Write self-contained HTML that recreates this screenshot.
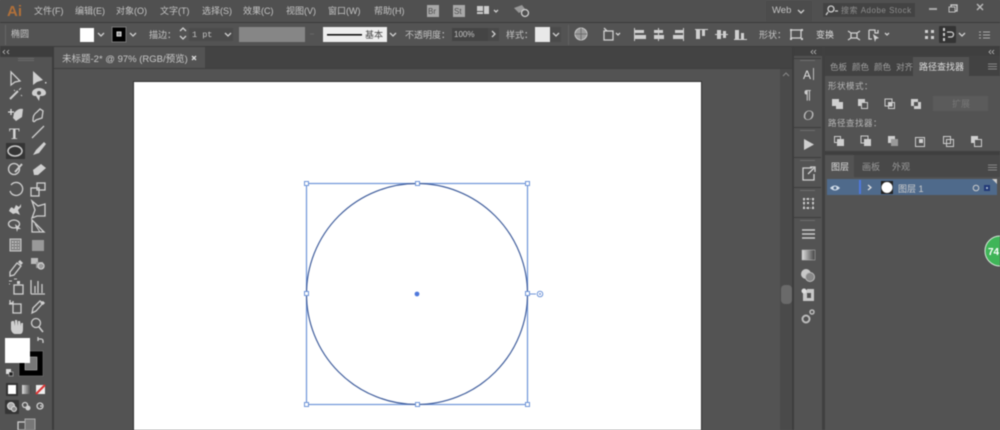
<!DOCTYPE html>
<html><head><meta charset="utf-8"><style>
html,body{margin:0;padding:0;background:#555;width:1000px;height:430px;overflow:hidden}
svg{display:block;filter:blur(.45px)}
text{font-family:"Liberation Sans","Noto Sans CJK SC",sans-serif;font-size:9px;fill:#c4c4c4}
.i{fill:none;stroke:#cfcfcf;stroke-width:1.3}
.f{fill:#cfcfcf}
</style></head><body>
<svg width="1000" height="430" viewBox="0 0 1000 430" xmlns="http://www.w3.org/2000/svg">
<rect width="1000" height="430" fill="#555"/>
<!-- menu bar -->
<rect width="1000" height="22" fill="#505050"/>
<rect y="22" width="1000" height="1" fill="#3a3a3a"/>
<text x="7" y="16" style="font-size:15px;font-weight:bold;fill:#b0703a">Ai</text>
<text x="34" y="14">文件(F)</text><text x="75" y="14">编辑(E)</text><text x="116" y="14">对象(O)</text><text x="160" y="14">文字(T)</text><text x="202" y="14">选择(S)</text><text x="243" y="14">效果(C)</text><text x="286" y="14">视图(V)</text><text x="328" y="14">窗口(W)</text><text x="374" y="14">帮助(H)</text>
<rect x="427" y="5" width="12" height="12" fill="#a8a8a8"/><text x="428" y="14" style="font-size:8px;fill:#505050">Br</text>
<rect x="453" y="5" width="12" height="12" fill="#a8a8a8"/><text x="454" y="14" style="font-size:8px;fill:#505050">St</text>
<rect x="477" y="6" width="6" height="5" fill="#ccc"/><rect x="484" y="6" width="5" height="8" fill="#ccc"/><rect x="477" y="12" width="6" height="2" fill="#ccc"/>
<path d="M494 10l2 2 2-2" class="i"/>
<path d="M514 8l8-3 3 4-6 4z" fill="#999"/><circle cx="525" cy="13" r="3.500" class="i"/>
<rect x="766" y="1" width="46" height="20" fill="#4c4c4c"/>
<text x="772" y="13" style="font-size:9.5px">Web</text><path d="M798 10l3 3 3-3" class="i"/>
<rect x="823" y="3" width="92" height="14" rx="1" fill="#434343"/>
<circle cx="831" cy="9" r="3" class="i"/><path d="M828 12l-2 3M835 11h3" class="i"/>
<text x="841" y="13" style="font-size:8px;fill:#8e8e8e;letter-spacing:.5px">搜索 Adobe Stock</text>
<rect x="929" y="8" width="8" height="2" fill="#aaa"/>
<rect x="951" y="5" width="6" height="6" class="i" stroke-width="1"/><rect x="949" y="7" width="6" height="5" fill="#505050" stroke="#bbb"/>
<path d="M977 4l6 6M983 4l-6 6" stroke="#bbb" stroke-width="1.400"/>
<!-- control bar -->
<rect y="23" width="1000" height="24" fill="#535353"/>
<rect y="46" width="1000" height="1" fill="#3c3c3c"/>
<rect x="5" y="25" width="1" height="20" fill="#666"/>
<text x="11" y="37">椭圆</text>
<rect x="80" y="28" width="14" height="14" fill="#fff"/>
<path d="M98 33l3 3 3-3" class="i"/>
<rect x="112" y="27" width="14" height="15" fill="#000" stroke="#777"/><rect x="117" y="32" width="4" height="4" fill="#999" stroke="#ddd"/>
<path d="M130 33l3 3 3-3" class="i"/>
<text x="149" y="38">描边：</text>
<path d="M180 31l3-3 3 3M180 36l3 3 3-3" class="i"/>
<rect x="189" y="28" width="32" height="13" fill="#4b4b4b"/><text x="192" y="37" style="font-family:'Liberation Mono',monospace;font-size:8.5px">1 pt</text>
<rect x="221" y="28" width="12" height="13" fill="#4b4b4b"/><path d="M225 33l3 3 3-3" class="i"/>
<rect x="239" y="27" width="66" height="15" fill="#868686"/>
<path d="M310 34h4" stroke="#666"/>
<rect x="323" y="27" width="64" height="15" fill="#eee"/>
<rect x="327" y="34" width="35" height="1.600" fill="#111"/>
<text x="365" y="38" style="fill:#444">基本</text>
<path d="M390 33l3 3 3-3" class="i"/>
<text x="405" y="38">不透明度：</text>
<rect x="452" y="28" width="36" height="13" fill="#444"/><text x="454" y="37" style="font-size:8px">100%</text>
<rect x="488" y="28" width="11" height="13" fill="#494949"/><path d="M492 31l3 3-3 3" class="i"/>
<text x="506" y="38">样式：</text>
<rect x="535" y="27" width="15" height="15" fill="#e8e8e8"/><rect x="550" y="27" width="11" height="15" fill="#4b4b4b"/>
<path d="M553 33l3 3 3-3" class="i"/>
<rect x="568" y="25" width="1" height="20" fill="#606060"/>
<circle cx="581" cy="34" r="6" fill="#9a9a9a" stroke="#ccc"/><path d="M575 34h12M581 28v12" stroke="#666" stroke-width=".8"/>
<rect x="604" y="31" width="9" height="9" class="i" fill="none"/><path d="M604 28l3 3" class="i"/><path d="M616 33l2 2 2-2" class="i"/>
<g class="f"><rect x="634" y="28" width="1" height="13"/><rect x="635" y="30" width="9" height="3"/><rect x="635" y="35" width="11" height="4"/>
<rect x="658" y="28" width="1" height="13"/><rect x="654" y="30" width="9" height="3"/><rect x="654" y="35" width="10" height="4"/>
<rect x="683" y="28" width="1" height="13"/><rect x="675" y="30" width="8" height="3"/><rect x="673" y="35" width="10" height="4"/>
<rect x="695" y="29" width="13" height="1"/><rect x="696" y="30" width="4" height="9"/><rect x="702" y="30" width="3" height="6"/>
<rect x="715" y="34" width="13" height="1"/><rect x="717" y="30" width="4" height="9"/><rect x="723" y="31" width="3" height="7"/>
<rect x="734" y="39" width="13" height="1"/><rect x="735" y="30" width="4" height="9"/><rect x="741" y="33" width="3" height="6"/></g>
<text x="759" y="38">形状：</text>
<rect x="791" y="30" width="10" height="8" class="i" stroke-width="1"/><rect x="790" y="29" width="2" height="2" class="f"/><rect x="801" y="29" width="2" height="2" class="f"/><rect x="790" y="38" width="2" height="2" class="f"/><rect x="801" y="38" width="2" height="2" class="f"/>
<text x="816" y="38" style="fill:#ddd">变换</text>
<path d="M848 31l3 2h6l3-2M848 40l3-2h6l3 2M851 33v5M857 33v5" class="i"/>
<path d="M869 30h6v3h3v-3M869 30v9h3" class="i"/><path d="M873 34l6 4-3 1-1 3z" class="f"/><path d="M885 33l2 2 2-2" class="i"/>
<g class="f"><rect x="925" y="30" width="3" height="3"/><rect x="931" y="30" width="3" height="3"/><rect x="925" y="36" width="3" height="3"/><rect x="931" y="36" width="3" height="3"/></g>
<rect x="939" y="26" width="17" height="17" rx="1" fill="#343434"/>
<rect x="943" y="28" width="2" height="3" class="f"/><rect x="943" y="33" width="2" height="3" class="f"/><rect x="943" y="38" width="2" height="3" class="f"/><path d="M947 32h4a2 2 0 0 1 0 5h-3" class="i"/>
<path d="M959 33l3 3 3-3" class="i"/>
<path d="M979 32h2M983 32h7M979 35h2M983 35h7M979 38h2M983 38h7" stroke="#aaa"/>
<!-- tab bar -->
<rect y="47" width="1000" height="22" fill="#434343"/>
<rect x="54" y="47" width="151" height="22" fill="#535353"/>
<text x="62" y="62" style="font-size:9.5px;fill:#c8c8c8">未标题-2* @ 97% (RGB/预览)</text>
<path d="M192 56l4 4M196 56l-4 4" stroke="#ddd" stroke-width="1.300"/>
<rect x="54" y="68" width="739" height="1" fill="#3f3f3f"/>
<!-- canvas -->
<rect x="53" y="69" width="740" height="361" fill="#535353"/>
<rect x="134" y="82" width="567" height="348" fill="#fff"/>
<rect x="133" y="82" width="1" height="348" fill="#333"/>
<rect x="701" y="82" width="1" height="348" fill="#333"/>
<rect x="133" y="81" width="569" height="1" fill="#333"/>
<!-- selection -->
<rect x="306.500" y="183.500" width="221" height="221" fill="none" stroke="#6f95d8" stroke-width="1.200"/>
<circle cx="417" cy="294" r="110.500" fill="none" stroke="#3f5d9c" stroke-width="1.200"/>
<path d="M528 294h8" stroke="#6f95d8"/><circle cx="540" cy="294" r="2.800" fill="#fff" stroke="#6f95d8"/><circle cx="540" cy="294" r=".9" fill="#5a80d0"/>
<g fill="#fff" stroke="#6f95d8"><rect x="304.500" y="181.500" width="4" height="4"/><rect x="415.500" y="181.500" width="4" height="4"/><rect x="525.500" y="181.500" width="4" height="4"/><rect x="304.500" y="291.500" width="4" height="4"/><rect x="525.500" y="291.500" width="4" height="4"/><rect x="304.500" y="402.500" width="4" height="4"/><rect x="415.500" y="402.500" width="4" height="4"/><rect x="525.500" y="402.500" width="4" height="4"/></g>
<circle cx="417" cy="294" r="2.400" fill="#4f78dc"/>
<!-- left toolbar -->
<rect y="47" width="53" height="383" fill="#535353"/>
<rect x="0" y="47" width="53" height="10" fill="#3d3d3d"/>
<path d="M5 50l-2 2 2 2M9 50l-2 2 2 2" stroke="#bbb" fill="none" stroke-width=".8"/>
<rect x="52" y="47" width="2" height="383" fill="#3c3c3c"/>
<rect x="18" y="58" width="16" height="1" fill="#6a6a6a"/><rect x="18" y="60" width="16" height="1" fill="#6a6a6a"/>
<!-- tools -->
<path d="M11 72l0 13 4-3 5-1z" class="i"/>
<path d="M33 71v14l4-3 6-2z" class="f"/><rect x="45" y="82" width="1.500" height="1.500" class="f"/>
<path d="M10 99l8-8" stroke="#ccc" stroke-width="2"/><path d="M19 90l2-2M14 90l1 1M21 95l1 1" stroke="#ccc"/>
<path d="M32 93a7 5 0 0 1 14 0c0 3-4 3-6 3l-1 5-3-5c-3 0-4-1-4-3z" class="f"/><circle cx="39" cy="93" r="2" fill="#535353"/>
<path d="M14 113c3-3 5-5 9-4l-1 8-6 4-3-3z" class="f"/><path d="M8 112h6M11 109v6" stroke="#ddd" stroke-width="1.300"/>
<path d="M33 121c0-5 1-7 4-9l3-3 3 2-1 7-6 2c-2 2-2 2-3 1z" class="i"/>
<text x="9" y="139" style="font-size:16px;font-family:'Liberation Serif',serif;fill:#d4d4d4;font-weight:bold">T</text>
<path d="M32 138l12-12" stroke="#ccc" stroke-width="1.300"/>
<rect x="6" y="143" width="19" height="16" fill="#353535"/><ellipse cx="15" cy="151" rx="7" ry="5" fill="none" stroke="#ccc" stroke-width="1.500"/>
<path d="M33 155l3-5 8-8 2 2-7 9z" class="f"/>
<circle cx="14" cy="169" r="5.500" class="i" stroke-width="2"/><path d="M15 172l7-8" stroke="#ccc" stroke-width="2"/>
<path d="M33 170l8-6 5 4-8 7h-4z" class="f"/>
<path d="M11 185a6.500 6.500 0 1 1 -1 6" class="i" stroke-width="1.800"/>
<rect x="31" y="188" width="8" height="8" class="i"/><rect x="37" y="183" width="8" height="7" class="i"/>
<path d="M9 211c2-5 3-4 5-2l2-4 3 2 2-3v3l-3 3 2 5-4-2-3 1z" class="f"/>
<path d="M32 201l6 5 7-2v12h-8l-5 2 3-8z" class="i"/>
<ellipse cx="14" cy="224" rx="5.500" ry="4" class="i"/><path d="M15 224l6 5-3 0-1 3z" class="f"/>
<path d="M32 220v12h12z" class="i"/><path d="M35 224l5 8" stroke="#ccc"/>
<rect x="10" y="239" width="11" height="12" fill="#888" stroke="#ccc"/><path d="M12 242h7M12 245h7M12 248h7" stroke="#ddd" stroke-dasharray="1.500 1.500"/>
<rect x="32" y="240" width="12" height="11" fill="#999"/>
<path d="M10 272l7-9 4 3-7 9-4 1z" class="i"/><path d="M18 262l2-2 3 3-2 2" class="f"/>
<rect x="31" y="258" width="7" height="6" fill="#bbb"/><rect x="36" y="262" width="7" height="6" fill="#999"/><circle cx="41" cy="266" r="3" class="i"/>
<rect x="14" y="285" width="9" height="9" class="i"/><path d="M9 281h3M9 284h1M14 279h3" stroke="#ccc"/><rect x="17" y="281" width="3" height="3" class="f"/>
<path d="M31 280v14M35 293v-7M38 293v-12M42 293v-9M31 294h14" stroke="#ccc" stroke-width="1.300"/>
<path d="M9 304h12v9h-8v-12" class="i"/><path d="M10 300v3h3" class="i"/>
<path d="M32 313l1-5 7-7 3 2-7 8z" class="i"/><path d="M40 303l3-2 2 2-2 2" class="f"/>
<path d="M11 322v7c0 2 2 5 4 5h5c2 0 3-2 3-5v-6l-2 0v3l-1-5-2 0v5l-1-6h-2v6l-1-5h-2z" class="f"/>
<circle cx="36" cy="323" r="4.500" class="i"/><path d="M39 327l4 5" stroke="#ccc" stroke-width="1.600"/>
<!-- fill stroke -->
<rect x="19" y="351" width="24" height="25" fill="#000" stroke="#888" stroke-width=".5"/>
<rect x="25" y="357" width="12" height="13" fill="#777" stroke="#ccc" stroke-width=".5"/>
<rect x="5" y="338" width="25" height="25" fill="#fff"/>
<path d="M38 339h3a2 2 0 0 1 2 2v2M38 337v4" class="i" stroke-width="1"/>
<rect x="6" y="369" width="5" height="5" fill="#ddd"/><rect x="9" y="372" width="4" height="4" fill="#222" stroke="#ddd" stroke-width=".5"/>
<rect x="6" y="383" width="12" height="13" fill="#333"/><rect x="8" y="385" width="8" height="9" fill="#fff"/>
<defs><linearGradient id="g"><stop offset="0" stop-color="#ddd"/><stop offset="1" stop-color="#444"/></linearGradient></defs>
<rect x="22" y="385" width="9" height="9" fill="url(#g)"/>
<rect x="36" y="385" width="9" height="9" fill="#eee"/><path d="M36 394l9-9" stroke="#d33" stroke-width="2"/>
<rect x="5" y="400" width="14" height="14" rx="1" fill="#353535"/><circle cx="11" cy="406" r="3.500" fill="#aaa" stroke="#ddd"/><circle cx="14" cy="409" r="2.500" fill="#888" stroke="#ddd"/>
<circle cx="25" cy="405" r="2.500" class="i"/><circle cx="28" cy="408" r="2.500" class="f"/>
<circle cx="40" cy="406" r="3" class="i"/><circle cx="41" cy="406" r="1" class="f"/>
<rect x="18" y="422" width="9" height="8" class="i" fill="#666"/><rect x="25" y="419" width="10" height="11" fill="#777" stroke="#aaa"/>
<!-- right scroll strip -->
<rect x="780" y="69" width="13" height="361" fill="#4a4a4a"/>
<path d="M783 76l3-3 3 3" stroke="#888" fill="none"/>
<rect x="781" y="285" width="11" height="19" rx="4" fill="#6a6a6a"/>
<rect x="792" y="47" width="2" height="383" fill="#3d3d3d"/>
<!-- dock -->
<rect x="794" y="47" width="28" height="383" fill="#535353"/>
<rect x="794" y="47" width="206" height="9" fill="#3f3f3f"/>
<path d="M813 50l-2 2 2 2M816 50l-2 2 2 2M991 50l-2 2 2 2M994 50l-2 2 2 2" stroke="#bbb" fill="none" stroke-width=".8"/>
<rect x="822" y="47" width="3" height="383" fill="#404040"/>
<rect x="794" y="58" width="27" height="1" fill="#3c3c3c"/>
<rect x="800" y="60" width="15" height="1" fill="#6c6c6c"/>
<text x="803" y="79" style="font-size:12px;fill:#ddd">A</text><rect x="813" y="68" width="1" height="12" fill="#bbb"/>
<text x="804" y="99" style="font-size:13px;fill:#ccc;font-weight:bold">¶</text>
<text x="803" y="120" style="font-size:15px;fill:#bbb;font-style:italic;font-family:'Liberation Serif',serif">O</text>
<rect x="794" y="127" width="27" height="1" fill="#3c3c3c"/><rect x="800" y="130" width="15" height="1" fill="#6c6c6c"/>
<path d="M804 139l10 5.500-10 5.500z" fill="#d0d0d0"/>
<rect x="794" y="157" width="27" height="1" fill="#3c3c3c"/><rect x="800" y="160" width="15" height="1" fill="#6c6c6c"/>
<path d="M812 168h-9v12h11v-6" class="i"/><path d="M808 174l6-6M810 167h5v5" class="i"/>
<rect x="794" y="187" width="27" height="1" fill="#3c3c3c"/><rect x="800" y="190" width="15" height="1" fill="#6c6c6c"/>
<rect x="804" y="199" width="9" height="9" fill="none" stroke="#aaa" stroke-dasharray="1 1"/><g class="f"><rect x="803" y="198" width="2" height="2"/><rect x="807" y="198" width="2" height="2"/><rect x="812" y="198" width="2" height="2"/><rect x="803" y="202" width="2" height="2"/><rect x="807" y="202" width="2" height="2"/><rect x="812" y="202" width="2" height="2"/><rect x="803" y="207" width="2" height="2"/><rect x="807" y="207" width="2" height="2"/><rect x="812" y="207" width="2" height="2"/></g>
<rect x="794" y="217" width="27" height="1" fill="#3c3c3c"/><rect x="800" y="220" width="15" height="1" fill="#6c6c6c"/>
<path d="M802 230h13M802 234h13M802 238h13" stroke="#ccc" stroke-width="1.500"/>
<rect x="802" y="250" width="13" height="10" fill="url(#g)" stroke="#bbb" stroke-width=".5"/>
<circle cx="806" cy="274" r="5" fill="#c8c8c8"/><circle cx="810" cy="277" r="4.500" fill="#888" stroke="#bbb"/>
<path d="M803 290h4v-1h7v12h-11z" fill="#c8c8c8"/><rect x="807" y="293" width="4" height="5" fill="#535353"/><circle cx="804" cy="291" r="2.500" fill="#ddd"/>
<circle cx="806" cy="319" r="3.500" fill="none" stroke="#bbb" stroke-width="2"/><circle cx="812" cy="312" r="2" fill="none" stroke="#bbb" stroke-width="1.500"/>
<!-- top panel -->
<rect x="825" y="56" width="175" height="20" fill="#424242"/>
<rect x="825" y="76" width="175" height="75" fill="#535353"/>
<rect x="913" y="57" width="56" height="19" fill="#535353"/>
<text x="830" y="70" style="font-size:8.5px;fill:#a0a0a0">色板</text><text x="852" y="70" style="font-size:8.5px;fill:#a0a0a0">颜色</text><text x="874" y="70" style="font-size:8.5px;fill:#a0a0a0">颜色</text><text x="896" y="70" style="font-size:8.5px;fill:#a0a0a0">对齐</text>
<text x="919" y="70" style="font-size:9px;fill:#ddd">路径查找器</text>
<path d="M988 64h9M988 66.500h9M988 69h9" stroke="#888"/>
<text x="828" y="89" style="fill:#b8b8b8;letter-spacing:.5px;font-size:8.5px">形状模式：</text>
<text x="828" y="126" style="fill:#b8b8b8;letter-spacing:.5px;font-size:8.5px">路径查找器：</text>
<rect x="933" y="96" width="55" height="15" fill="#5b5b5b"/><text x="952" y="107" style="fill:#777">扩展</text>
<g class="f">
<rect x="832" y="99" width="7" height="7"/><rect x="836" y="102" width="7" height="7"/>
<rect x="858" y="99" width="7" height="7"/><rect x="861.500" y="102.500" width="6" height="6" fill="#535353" stroke="#ccc"/>
<rect x="885" y="99" width="7" height="7" fill="none" stroke="#ccc"/><rect x="888.500" y="102.500" width="6" height="6" fill="none" stroke="#ccc"/><rect x="888" y="102" width="4" height="4"/>
<rect x="911" y="99" width="7" height="7"/><rect x="914" y="102" width="7" height="7"/><rect x="914" y="102" width="4" height="4" fill="#535353"/>
<rect x="834.500" y="136.500" width="6" height="6" fill="none" stroke="#ccc"/><rect x="837" y="139" width="7" height="7"/>
<rect x="861" y="136" width="7" height="7" fill="none" stroke="#ccc"/><rect x="864" y="139" width="7" height="7"/>
<rect x="888" y="136" width="7" height="7"/><rect x="891" y="139" width="7" height="7" fill="#999"/>
<rect x="915.500" y="137.500" width="9" height="9" fill="none" stroke="#ccc"/><rect x="919" y="139" width="4" height="4"/>
<rect x="943.500" y="136.500" width="7" height="7" fill="none" stroke="#ccc"/><rect x="946.500" y="139.500" width="7" height="7" fill="none" stroke="#ccc"/>
<rect x="971" y="136" width="7" height="7"/><rect x="974.500" y="139.500" width="7" height="7" fill="#535353" stroke="#ccc"/>
</g>
<!-- layers panel -->
<rect x="825" y="151" width="175" height="4" fill="#3f3f3f"/>
<rect x="825" y="155" width="175" height="22" fill="#484848"/>
<rect x="825" y="155" width="29" height="22" fill="#535353"/>
<text x="831" y="170" style="fill:#ddd">图层</text><text x="862" y="170" style="fill:#999">画板</text><text x="892" y="170" style="fill:#999">外观</text>
<path d="M988 165h9M988 167.500h9M988 170h9" stroke="#888"/>
<rect x="825" y="177" width="175" height="253" fill="#535353"/>
<rect x="827" y="179" width="170" height="16" fill="#4f6a8b"/>
<path d="M830 188q5-5 10 0q-5 5-10 0z" fill="#cfdbe8"/><circle cx="835" cy="188" r="1.500" fill="#4f6a8b"/>
<rect x="859" y="180" width="2" height="14" fill="#4f78dc"/>
<path d="M868 185l3 2.500-3 2.500" fill="none" stroke="#ddd" stroke-width="1.300"/>
<rect x="881" y="181" width="12" height="13" fill="#222"/><circle cx="887" cy="187.500" r="5.500" fill="#fff"/>
<text x="898" y="192" style="fill:#ccc">图层 1</text>
<circle cx="976" cy="188" r="2.800" fill="none" stroke="#ccc"/>
<rect x="984" y="185" width="6" height="6" fill="#223a77"/><circle cx="987" cy="188" r="1" fill="#bcd"/>
<path d="M992 179h5v5z" fill="#ccc"/>
<!-- green badge -->
<circle cx="1000" cy="251" r="15" fill="#3fb558" stroke="#d6e8da" stroke-width="1"/>
<text x="988" y="255" style="font-size:10px;fill:#fff;font-weight:bold">74</text>
</svg>
</body></html>
